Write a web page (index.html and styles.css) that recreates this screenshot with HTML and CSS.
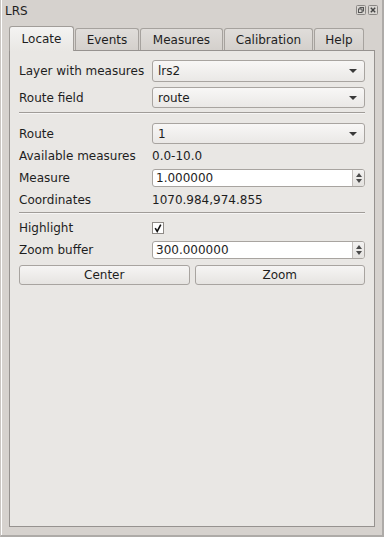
FILE: index.html
```html
<!DOCTYPE html>
<html lang="en">

<head>
    <meta charset="UTF-8">
    <title>LRS</title>
    <link rel="stylesheet" href="styles.css">
</head>

<body>
    <div class="dock">
        <div class="titlebar">
            <span class="title">LRS</span>
            <div class="dock-buttons">
                <svg width="10" height="10" viewBox="0 0 10 10">
                    <rect x="0.5" y="0.5" width="9" height="9" rx="1" fill="#d8d5d1" stroke="#8a8784"/>
                    <rect x="4" y="2.5" width="3.5" height="3.5" fill="none" stroke="#555"/>
                    <rect x="2.5" y="4" width="3.5" height="3.5" fill="#d8d5d1" stroke="#555"/>
                </svg>
                <svg width="10" height="10" viewBox="0 0 10 10">
                    <rect x="0.5" y="0.5" width="9" height="9" rx="1" fill="#d8d5d1" stroke="#8a8784"/>
                    <path d="M2.8 2.8 L7.2 7.2 M7.2 2.8 L2.8 7.2" stroke="#444" stroke-width="1.4"/>
                </svg>
            </div>
        </div>

        <div class="tabbar">
            <div class="tab active w-locate">Locate</div>
            <div class="tab w-events">Events</div>
            <div class="tab w-measures">Measures</div>
            <div class="tab w-calib">Calibration</div>
            <div class="tab w-help">Help</div>
        </div>

        <div class="pane">
            <div class="row r-first">
                <label class="lbl">Layer with measures</label>
                <div class="combo"><span>lrs2</span><i class="arrow"></i></div>
            </div>
            <div class="row r-combo">
                <label class="lbl">Route field</label>
                <div class="combo"><span>route</span><i class="arrow"></i></div>
            </div>
            <div class="sep sep-a"></div>
            <div class="row r-route">
                <label class="lbl">Route</label>
                <div class="combo"><span>1</span><i class="arrow"></i></div>
            </div>
            <div class="row text-row r-gap4">
                <label class="lbl">Available measures</label>
                <span class="value">0.0-10.0</span>
            </div>
            <div class="row r-spin r-gap5">
                <label class="lbl">Measure</label>
                <div class="spin">
                    <span class="spin-text">1.000000</span>
                    <div class="spin-btns"><i class="up"></i><i class="down"></i></div>
                </div>
            </div>
            <div class="row text-row r-gap5">
                <label class="lbl">Coordinates</label>
                <span class="value">1070.984,974.855</span>
            </div>
            <div class="sep sep-b"></div>
            <div class="row check-row r-gap4">
                <label class="lbl">Highlight</label>
                <span class="check">
                    <svg width="10" height="10" viewBox="0 0 10 10">
                        <path d="M2.2 5.2 L4.2 8.4 L7.8 1.6" fill="none" stroke="#111" stroke-width="1.6"/>
                    </svg>
                </span>
            </div>
            <div class="row r-spin r-gap3">
                <label class="lbl">Zoom buffer</label>
                <div class="spin">
                    <span class="spin-text">300.000000</span>
                    <div class="spin-btns"><i class="up"></i><i class="down"></i></div>
                </div>
            </div>
            <div class="buttons">
                <button class="btn">Center</button>
                <button class="btn">Zoom</button>
            </div>
        </div>
    </div>
</body>

</html>
```

FILE: styles.css
```css
body {
    margin: 0;
    font-family: "DejaVu Sans", sans-serif;
    font-size: 12px;
    color: #1e1e1e;
    background-color: #d6d2ce;
}

.dock {
    width: 384px;
    height: 537px;
    box-sizing: border-box;
    background-color: #d6d2ce;
    border-right: 2px solid #aeaba8;
    border-bottom: 2px solid #aeaba8;
    border-left: 1px solid #c9c5c1;
    box-shadow: inset 1px 0 0 #ffffff;
    display: flex;
    flex-direction: column;
}

.titlebar {
    height: 26px;
    display: flex;
    justify-content: space-between;
    align-items: flex-start;
    padding: 3px 4px 0 4px;
    box-sizing: border-box;
}

.title {
    line-height: 16px;
}

.dock-buttons {
    display: flex;
    gap: 2px;
    margin-top: 2px;
}

.tabbar {
    display: flex;
    align-items: flex-end;
    height: 24px;
    margin-left: 8px;
}

.tab {
    height: 22px;
    box-sizing: border-box;
    border: 1px solid #a6a29e;
    border-bottom: none;
    border-radius: 3px 3px 0 0;
    background: linear-gradient(#e0ddda, #d4d0cc);
    display: flex;
    align-items: center;
    justify-content: center;
    padding-top: 1px;
    margin-right: 1px;
}

.tab.active {
    height: 25px;
    background: linear-gradient(#f4f3f2, #e9e7e4);
    border-color: #a19d99;
    position: relative;
    top: 1px;
    padding-bottom: 2px;
}

.w-locate { width: 65px; }
.w-events { width: 64px; }
.w-measures { width: 83px; }
.w-calib { width: 89px; }
.w-help { width: 50px; }

.pane {
    margin-left: 8px;
    width: 366px;
    height: 477px;
    box-sizing: border-box;
    border: 1px solid #96928f;
    background-color: #e9e7e4;
    padding: 0 9px;
    display: flex;
    flex-direction: column;
}

.row {
    display: flex;
    align-items: center;
    height: 22px;
}

.lbl {
    width: 133px;
    flex: none;
}

.r-first { margin-top: 9px; }
.r-combo { margin-top: 5px; height: 21px; }
.r-route { margin-top: 9px; height: 21px; }
.r-gap5 { margin-top: 5px; }
.r-gap4 { margin-top: 4px; }
.r-gap3 { margin-top: 3px; }

.text-row {
    height: 16px;
}

.check-row {
    height: 20px;
}

.r-spin {
    height: 18px;
}

.sep {
    height: 1px;
    background-color: #a09c98;
    border-bottom: 1px solid #f6f5f4;
}

.sep-a { margin-top: 4px; }
.sep-b { margin-top: 4px; }

.combo {
    flex: 1;
    height: 100%;
    box-sizing: border-box;
    border: 1px solid #a8a4a0;
    border-radius: 3px;
    background: linear-gradient(#f8f7f6, #eae8e6);
    display: flex;
    align-items: center;
    justify-content: space-between;
    padding: 0 7px 0 5px;
}

.arrow {
    width: 0;
    height: 0;
    border-left: 4px solid transparent;
    border-right: 4px solid transparent;
    border-top: 4px solid #3a3a3a;
}

.spin {
    flex: 1;
    height: 18px;
    box-sizing: border-box;
    border: 1px solid #a8a4a0;
    border-radius: 3px;
    background-color: #ffffff;
    display: flex;
    align-items: center;
    justify-content: space-between;
}

.spin-text {
    padding-left: 3px;
}

.spin-btns {
    width: 11px;
    height: 100%;
    border-left: 1px solid #c2bebb;
    background: linear-gradient(#f3f2f1, #e4e2df);
    border-radius: 0 2px 2px 0;
    display: flex;
    flex-direction: column;
    align-items: center;
    justify-content: center;
    gap: 2px;
}

.up {
    width: 0;
    height: 0;
    border-left: 3px solid transparent;
    border-right: 3px solid transparent;
    border-bottom: 4px solid #4a4a4a;
}

.down {
    width: 0;
    height: 0;
    border-left: 3px solid transparent;
    border-right: 3px solid transparent;
    border-top: 4px solid #4a4a4a;
}

.check {
    width: 12px;
    height: 12px;
    box-sizing: border-box;
    border: 1px solid #8f8b87;
    background-color: #ffffff;
    display: flex;
    align-items: center;
    justify-content: center;
}

.buttons {
    display: flex;
    gap: 5px;
    margin-top: 6px;
}

.btn {
    flex: 1;
    height: 20px;
    box-sizing: border-box;
    border: 1px solid #a8a4a0;
    border-radius: 3px;
    background: linear-gradient(#f6f5f4, #e6e4e1);
    font-family: "DejaVu Sans", sans-serif;
    font-size: 12px;
    color: #1e1e1e;
    padding: 0;
}
```
